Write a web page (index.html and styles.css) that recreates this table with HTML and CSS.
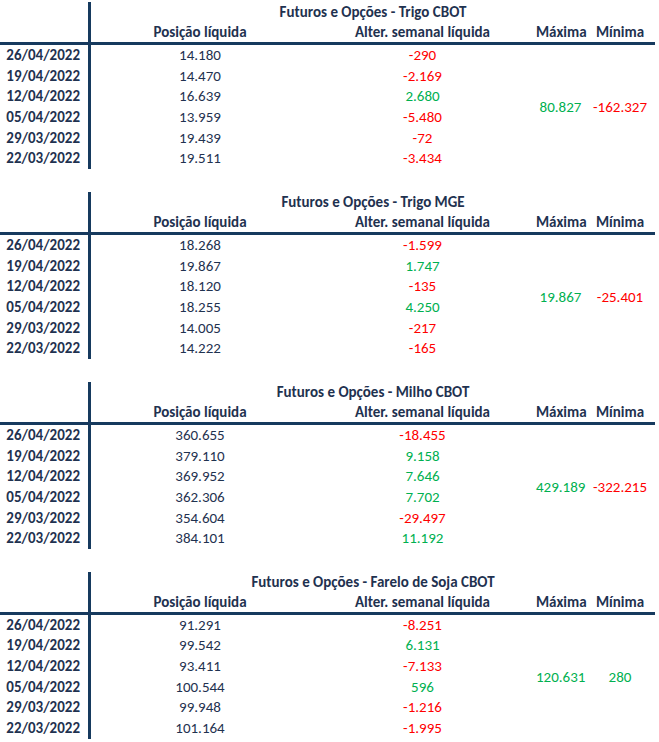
FILE: index.html
```html
<!DOCTYPE html>
<html lang="pt-BR">
<head>
<meta charset="utf-8">
<title>Futuros e Opções</title>
<link rel="stylesheet" href="styles.css">
</head>
<body>
<main class="page">

<section class="tbl">
  <div class="vline"></div>
  <div class="title">Futuros e Opções - Trigo CBOT</div>
  <div class="hd c1">Posição líquida</div>
  <div class="hd c2">Alter. semanal líquida</div>
  <div class="hd c3">Máxima</div>
  <div class="hd c4">Mínima</div>
  <div class="hline"></div>
  <div class="date r1">26/04/2022</div><div class="num c1 r1">14.180</div><div class="num c2 r1 neg">-290</div>
  <div class="date r2">19/04/2022</div><div class="num c1 r2">14.470</div><div class="num c2 r2 neg">-2.169</div>
  <div class="date r3">12/04/2022</div><div class="num c1 r3">16.639</div><div class="num c2 r3 pos">2.680</div>
  <div class="date r4">05/04/2022</div><div class="num c1 r4">13.959</div><div class="num c2 r4 neg">-5.480</div>
  <div class="date r5">29/03/2022</div><div class="num c1 r5">19.439</div><div class="num c2 r5 neg">-72</div>
  <div class="date r6">22/03/2022</div><div class="num c1 r6">19.511</div><div class="num c2 r6 neg">-3.434</div>
  <div class="ext c3 pos">80.827</div>
  <div class="ext c4 neg">-162.327</div>
</section>

<section class="tbl">
  <div class="vline"></div>
  <div class="title">Futuros e Opções - Trigo MGE</div>
  <div class="hd c1">Posição líquida</div>
  <div class="hd c2">Alter. semanal líquida</div>
  <div class="hd c3">Máxima</div>
  <div class="hd c4">Mínima</div>
  <div class="hline"></div>
  <div class="date r1">26/04/2022</div><div class="num c1 r1">18.268</div><div class="num c2 r1 neg">-1.599</div>
  <div class="date r2">19/04/2022</div><div class="num c1 r2">19.867</div><div class="num c2 r2 pos">1.747</div>
  <div class="date r3">12/04/2022</div><div class="num c1 r3">18.120</div><div class="num c2 r3 neg">-135</div>
  <div class="date r4">05/04/2022</div><div class="num c1 r4">18.255</div><div class="num c2 r4 pos">4.250</div>
  <div class="date r5">29/03/2022</div><div class="num c1 r5">14.005</div><div class="num c2 r5 neg">-217</div>
  <div class="date r6">22/03/2022</div><div class="num c1 r6">14.222</div><div class="num c2 r6 neg">-165</div>
  <div class="ext c3 pos">19.867</div>
  <div class="ext c4 neg">-25.401</div>
</section>

<section class="tbl">
  <div class="vline"></div>
  <div class="title">Futuros e Opções - Milho CBOT</div>
  <div class="hd c1">Posição líquida</div>
  <div class="hd c2">Alter. semanal líquida</div>
  <div class="hd c3">Máxima</div>
  <div class="hd c4">Mínima</div>
  <div class="hline"></div>
  <div class="date r1">26/04/2022</div><div class="num c1 r1">360.655</div><div class="num c2 r1 neg">-18.455</div>
  <div class="date r2">19/04/2022</div><div class="num c1 r2">379.110</div><div class="num c2 r2 pos">9.158</div>
  <div class="date r3">12/04/2022</div><div class="num c1 r3">369.952</div><div class="num c2 r3 pos">7.646</div>
  <div class="date r4">05/04/2022</div><div class="num c1 r4">362.306</div><div class="num c2 r4 pos">7.702</div>
  <div class="date r5">29/03/2022</div><div class="num c1 r5">354.604</div><div class="num c2 r5 neg">-29.497</div>
  <div class="date r6">22/03/2022</div><div class="num c1 r6">384.101</div><div class="num c2 r6 pos">11.192</div>
  <div class="ext c3 pos">429.189</div>
  <div class="ext c4 neg">-322.215</div>
</section>

<section class="tbl">
  <div class="vline"></div>
  <div class="title">Futuros e Opções - Farelo de Soja CBOT</div>
  <div class="hd c1">Posição líquida</div>
  <div class="hd c2">Alter. semanal líquida</div>
  <div class="hd c3">Máxima</div>
  <div class="hd c4">Mínima</div>
  <div class="hline"></div>
  <div class="date r1">26/04/2022</div><div class="num c1 r1">91.291</div><div class="num c2 r1 neg">-8.251</div>
  <div class="date r2">19/04/2022</div><div class="num c1 r2">99.542</div><div class="num c2 r2 pos">6.131</div>
  <div class="date r3">12/04/2022</div><div class="num c1 r3">93.411</div><div class="num c2 r3 neg">-7.133</div>
  <div class="date r4">05/04/2022</div><div class="num c1 r4">100.544</div><div class="num c2 r4 pos">596</div>
  <div class="date r5">29/03/2022</div><div class="num c1 r5">99.948</div><div class="num c2 r5 neg">-1.216</div>
  <div class="date r6">22/03/2022</div><div class="num c1 r6">101.164</div><div class="num c2 r6 neg">-1.995</div>
  <div class="ext c3 pos">120.631</div>
  <div class="ext c4 pos">280</div>
</section>

</main>
</body>
</html>
```

FILE: styles.css
```css
* { box-sizing: border-box; }
html, body { margin: 0; padding: 0; background: #ffffff; }
body {
  font-family: Carlito, Calibri, Lato, "Liberation Sans", sans-serif;
  font-size: 15px;
  color: #1f3250;
}
.page { padding-top: 2px; width: 659px; }

.tbl {
  display: grid;
  grid-template-columns: 88px 3px 218px 227px 49px 70px;
  grid-template-rows: 20px 20px 3px repeat(6, 20.67px);
  margin-bottom: 23px;
  line-height: 20px;
}

.vline {
  grid-column: 2;
  grid-row: 1 / -1;
  background: #163a5e;
}
.hline {
  grid-column: 1 / -1;
  grid-row: 3;
  background: #163a5e;
}

.title {
  grid-column: 3 / -1;
  grid-row: 1;
  text-align: center;
  font-weight: bold;
  color: #1f3250;
}
.hd {
  grid-row: 2;
  text-align: center;
  font-weight: bold;
  color: #1f3250;
  white-space: nowrap;
}
.c1 { grid-column: 3; }
.c2 { grid-column: 4; }
.c3 { grid-column: 5; }
.c4 { grid-column: 6; }

.r1 { grid-row: 4; }
.r2 { grid-row: 5; }
.r3 { grid-row: 6; }
.r4 { grid-row: 7; }
.r5 { grid-row: 8; }
.r6 { grid-row: 9; }

.date {
  grid-column: 1;
  text-align: right;
  padding-right: 8px;
  font-weight: bold;
  color: #1f3250;
  line-height: 20.67px;
}
.num {
  text-align: center;
  line-height: 20.67px;
  white-space: nowrap;
}
.ext {
  grid-row: 4 / span 6;
  align-self: center;
  text-align: center;
  white-space: nowrap;
}
.pos { color: #00b050; }
.neg { color: #ff0000; }
```
